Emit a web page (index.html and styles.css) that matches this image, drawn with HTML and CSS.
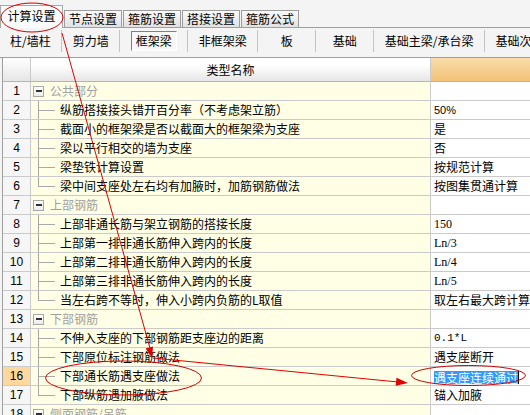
FILE: index.html
```html
<!DOCTYPE html>
<html lang="zh-CN">
<head>
<meta charset="utf-8">
<title>计算设置</title>
<link rel="stylesheet" href="styles.css">
</head>
<body>
<div class="page">
  <div class="tabs">
    <div class="tab active">计算设置</div>
    <div class="tab">节点设置</div>
    <div class="tab">箍筋设置</div>
    <div class="tab">搭接设置</div>
    <div class="tab">箍筋公式</div>
  </div>
  <div class="subtabs">
    <div class="subtab first">柱/墙柱</div>
    <div class="subtab">剪力墙</div>
    <div class="subtab"><span class="pressed">框架梁</span></div>
    <div class="subtab">非框架梁</div>
    <div class="subtab">板</div>
    <div class="subtab">基础</div>
    <div class="subtab">基础主梁/承台梁</div>
    <div class="subtab last">基础次梁</div>
  </div>
  <div class="grid">
    <div class="row head">
      <div class="num"></div>
      <div class="name">类型名称</div>
      <div class="val"></div>
    </div>
    <div class="row group">
      <div class="num">1</div>
      <div class="name"><span class="toggle"></span><span class="gtext">公共部分</span></div>
      <div class="val"></div>
    </div>
    <div class="row">
      <div class="num">2</div>
      <div class="name"><span class="branch"></span>纵筋搭接接头错开百分率（不考虑架立筋）</div>
      <div class="val sans">50%</div>
    </div>
    <div class="row">
      <div class="num">3</div>
      <div class="name"><span class="branch"></span>截面小的框架梁是否以截面大的框架梁为支座</div>
      <div class="val">是</div>
    </div>
    <div class="row">
      <div class="num">4</div>
      <div class="name"><span class="branch"></span>梁以平行相交的墙为支座</div>
      <div class="val">否</div>
    </div>
    <div class="row">
      <div class="num">5</div>
      <div class="name"><span class="branch"></span>梁垫铁计算设置</div>
      <div class="val">按规范计算</div>
    </div>
    <div class="row">
      <div class="num">6</div>
      <div class="name"><span class="branch end"></span>梁中间支座处左右均有加腋时，加筋钢筋做法</div>
      <div class="val">按图集贯通计算</div>
    </div>
    <div class="row group">
      <div class="num">7</div>
      <div class="name"><span class="toggle"></span><span class="gtext">上部钢筋</span></div>
      <div class="val"></div>
    </div>
    <div class="row">
      <div class="num">8</div>
      <div class="name"><span class="branch"></span>上部非通长筋与架立钢筋的搭接长度</div>
      <div class="val serif">150</div>
    </div>
    <div class="row">
      <div class="num">9</div>
      <div class="name"><span class="branch"></span>上部第一排非通长筋伸入跨内的长度</div>
      <div class="val serif">Ln/3</div>
    </div>
    <div class="row">
      <div class="num">10</div>
      <div class="name"><span class="branch"></span>上部第二排非通长筋伸入跨内的长度</div>
      <div class="val serif">Ln/4</div>
    </div>
    <div class="row">
      <div class="num">11</div>
      <div class="name"><span class="branch"></span>上部第三排非通长筋伸入跨内的长度</div>
      <div class="val serif">Ln/5</div>
    </div>
    <div class="row">
      <div class="num">12</div>
      <div class="name"><span class="branch end"></span>当左右跨不等时，伸入小跨内负筋的L取值</div>
      <div class="val">取左右最大跨计算</div>
    </div>
    <div class="row group">
      <div class="num">13</div>
      <div class="name"><span class="toggle"></span><span class="gtext">下部钢筋</span></div>
      <div class="val"></div>
    </div>
    <div class="row">
      <div class="num">14</div>
      <div class="name"><span class="branch"></span>不伸入支座的下部钢筋距支座边的距离</div>
      <div class="val mono">0.1*L</div>
    </div>
    <div class="row">
      <div class="num">15</div>
      <div class="name"><span class="branch"></span>下部原位标注钢筋做法</div>
      <div class="val">遇支座断开</div>
    </div>
    <div class="row current">
      <div class="num">16</div>
      <div class="name"><span class="branch"></span>下部通长筋遇支座做法</div>
      <div class="val"><span class="selected">遇支座连续通过</span><span class="caret"></span></div>
    </div>
    <div class="row">
      <div class="num">17</div>
      <div class="name"><span class="branch end"></span>下部纵筋遇加腋做法</div>
      <div class="val">锚入加腋</div>
    </div>
    <div class="row group">
      <div class="num">18</div>
      <div class="name"><span class="toggle"></span><span class="gtext">侧面钢筋/吊筋</span></div>
      <div class="val"></div>
    </div>
  </div>

  <svg class="marks" width="530" height="415" viewBox="0 0 530 415" xmlns="http://www.w3.org/2000/svg">
    <g fill="none" stroke="#d40000" stroke-width="1">
      <ellipse cx="32" cy="17.5" rx="31" ry="14.5"/>
      <ellipse cx="123.5" cy="378" rx="78" ry="17"/>
      <ellipse cx="468.5" cy="375.5" rx="57" ry="10"/>
    </g>
    <g stroke="#e00000" stroke-width="1">
      <line x1="62" y1="33" x2="150.5" y2="350"/>
      <line x1="153" y1="358" x2="398" y2="382"/>
    </g>
    <g fill="#e00000">
      <polygon points="152,358 153,346.5 145.6,348.6"/>
      <polygon points="408,383 396.5,377.8 395.7,385.8"/>
    </g>
  </svg>
</div>
</body>
</html>
```

FILE: styles.css
```css
html, body {
  margin: 0;
  padding: 0;
}

body {
  width: 530px;
  height: 415px;
  overflow: hidden;
  background: #f4f4f4;
  font-family: "Noto Sans CJK SC", "Noto Sans", sans-serif;
  font-size: 12px;
  color: #000;
}

.page {
  position: relative;
  width: 530px;
  height: 415px;
  overflow: hidden;
}

/* first tab strip */
.tabs {
  display: flex;
  align-items: flex-end;
  height: 28px;
  box-sizing: border-box;
  border-bottom: 1px solid #a0a0a0;
}

.tab {
  height: 17px;
  box-sizing: border-box;
  padding: 0 4px;
  margin-right: 1px;
  border: 1px solid #9c9c9c;
  border-bottom: none;
  background: linear-gradient(#fafafa, #e2e2e2);
  line-height: 16px;
  white-space: nowrap;
}

.tab.active {
  height: 23px;
  margin-bottom: -1px;
  padding: 0 6.5px;
  background: #fbfbfb;
  border-color: #a8a8a8;
  line-height: 19px;
}

/* second strip */
.subtabs {
  display: flex;
  align-items: center;
  height: 30px;
  box-sizing: border-box;
  padding-bottom: 3px;
  border-bottom: 1px solid #a0a0a0;
  background: #f4f4f4;
  white-space: nowrap;
}

.subtab {
  flex: none;
  min-width: 58px;
  box-sizing: border-box;
  padding: 0 10.5px;
  height: 22px;
  line-height: 22px;
  text-align: center;
  border-right: 1px solid #c4c4c4;
}

.subtab.first {
  padding-left: 10px;
}

.subtab.last {
  border-right: none;
}

.pressed {
  display: inline-block;
  padding: 0 4px;
  line-height: 18px;
  border: 1px solid;
  border-color: #808080 #ffffff #ffffff #808080;
  background: #f8f8f8;
}

/* grid */
.grid {
  margin-left: 2px;
  border-left: 1px solid #a0a0a0;
  background: #fff;
}

.row {
  display: grid;
  grid-template-columns: 28px 400px 1fr;
  height: 19px;
}

.row > div {
  box-sizing: border-box;
  border-bottom: 1px solid #cacaca;
  line-height: 18px;
  white-space: nowrap;
  overflow: hidden;
}

.num {
  border-right: 1px solid #cacaca;
  background: #f6f6f6;
  text-align: center;
  font-family: "Liberation Sans", "DejaVu Sans", sans-serif;
  font-size: 12px;
}

.name {
  display: flex;
  align-items: stretch;
  border-right: 1px solid #cacaca;
  background: #ffffe6;
}

.val {
  padding-left: 3px;
  background: #fff;
}

.row.head {
  height: 24px;
}

.row.head > div {
  line-height: 23px;
  border-bottom-color: #b4b4b4;
}

.row.head .num {
  background: linear-gradient(#ffffff, #e6e6e6);
}

.row.head .name {
  display: block;
  text-align: center;
  background: linear-gradient(#ffffff 30%, #e6e6e6);
}

.row.head .val {
  background: linear-gradient(#f9dcaa, #f2c276);
}

.row.current .num {
  background: #ffd89e;
}

.toggle {
  align-self: center;
  width: 11px;
  height: 11px;
  box-sizing: border-box;
  margin-left: 2px;
  margin-right: 6px;
  border: 1px solid #a8a8a8;
  background:
    linear-gradient(#303030, #303030) center / 6px 2px no-repeat,
    linear-gradient(#ffffff, #ececec);
}

.gtext {
  color: #a0a0a0;
}

.branch {
  flex: none;
  width: 22px;
  margin-left: 7px;
  background:
    linear-gradient(#a8a8a8, #a8a8a8) 0 0 / 1px 100% no-repeat,
    linear-gradient(#a8a8a8, #a8a8a8) 0 50% / 17px 1px no-repeat;
}

.branch.end {
  background:
    linear-gradient(#a8a8a8, #a8a8a8) 0 0 / 1px 50% no-repeat,
    linear-gradient(#a8a8a8, #a8a8a8) 0 50% / 17px 1px no-repeat;
}

.sans {
  font-family: "Liberation Sans", sans-serif;
  font-size: 11px;
}

.serif {
  font-family: "Liberation Serif", serif;
  font-size: 12px;
}

.mono {
  font-family: "Liberation Mono", monospace;
  font-size: 11px;
}

.selected {
  display: inline-block;
  line-height: 13px;
  background: #3399ff;
  color: #fff;
  vertical-align: middle;
}

.caret {
  display: inline-block;
  width: 1px;
  height: 13px;
  background: #000;
  vertical-align: middle;
}

.marks {
  position: absolute;
  left: 0;
  top: 0;
  pointer-events: none;
}
```
